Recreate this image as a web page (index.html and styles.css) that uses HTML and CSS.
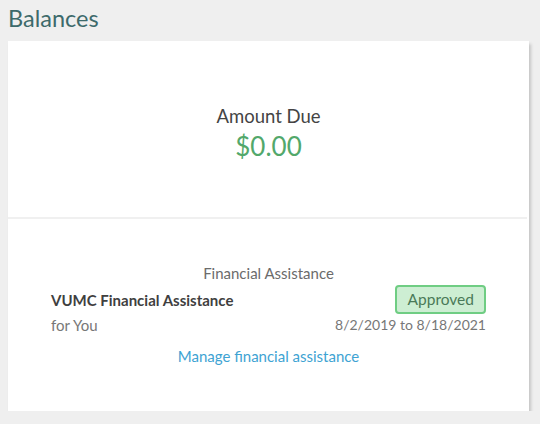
FILE: index.html
```html
<!DOCTYPE html>
<html>
<head>
<meta charset="utf-8">
<link rel="stylesheet" href="styles.css">
</head>
<body>
<h1 class="title">Balances</h1>
<div class="card">
  <div class="due">
    <div class="due-label">Amount Due</div>
    <div class="due-amount">$0.00</div>
  </div>
  <div class="divider"></div>
  <div class="fa">
    <div class="fa-head">Financial Assistance</div>
    <div class="fa-row">
      <div class="fa-left">
        <div class="fa-name">VUMC Financial Assistance</div>
        <div class="fa-sub">for You</div>
      </div>
      <div class="fa-right">
        <span class="badge">Approved</span>
        <div class="fa-sub fa-date">8/2/2019 to 8/18/2021</div>
      </div>
    </div>
    <a class="fa-link" href="#">Manage financial assistance</a>
  </div>
</div>
</body>
</html>
```

FILE: styles.css
```css
html, body {
  margin: 0;
  padding: 0;
  background: #efefef;
  font-family: Lato, "Open Sans", sans-serif;
}
body {
  padding: 0 11px 0 8px;
  width: 521px;
}
.title {
  margin: 0;
  height: 41px;
  box-sizing: border-box;
  padding-top: 3px;
  font-size: 23.5px;
  font-weight: 400;
  color: #3d6a6b;
  line-height: 30px;
}
.card {
  background: #fff;
  height: 370px;
  box-shadow: 2px 3px 3px rgba(0,0,0,0.18);
  display: flex;
  flex-direction: column;
}
.due {
  height: 176px;
  box-sizing: border-box;
  padding-top: 63px;
  text-align: center;
}
.due-label {
  font-size: 18.5px;
  color: #444;
  line-height: 24px;
}
.due-amount {
  font-size: 26px;
  color: #52a86b;
  line-height: 36px;
}
.divider {
  height: 2px;
  background: #f0f0f0;
  margin-right: 2px;
}
.fa {
  padding: 44px 43px 0 43px;
  display: flex;
  flex-direction: column;
  align-items: center;
}
.fa-head {
  font-size: 15px;
  color: #6b6b6b;
  line-height: 20px;
}
.fa-row {
  align-self: stretch;
  display: flex;
  justify-content: space-between;
  margin-top: 2px;
}
.fa-left, .fa-right {
  display: flex;
  flex-direction: column;
}
.fa-right { align-items: flex-end; }
.fa-name {
  font-size: 15px;
  font-weight: 700;
  color: #3f3f3f;
  line-height: 20px;
  margin-top: 5px;
}
.fa-sub {
  font-size: 15px;
  color: #777;
  line-height: 20px;
  margin-top: 5px;
}
.fa-right .fa-date {
  font-size: 14px;
  margin-top: 1px;
}
.badge {
  display: inline-block;
  background: #cdeed3;
  border: 2px solid #6fcd83;
  border-radius: 4px;
  color: #4a7a58;
  font-size: 15.5px;
  line-height: 23px;
  padding: 1px 10px 1px 11px;
}
.fa-link {
  margin-top: 11px;
  font-size: 15px;
  color: #3ea3d3;
  text-decoration: none;
  line-height: 20px;
}
```
